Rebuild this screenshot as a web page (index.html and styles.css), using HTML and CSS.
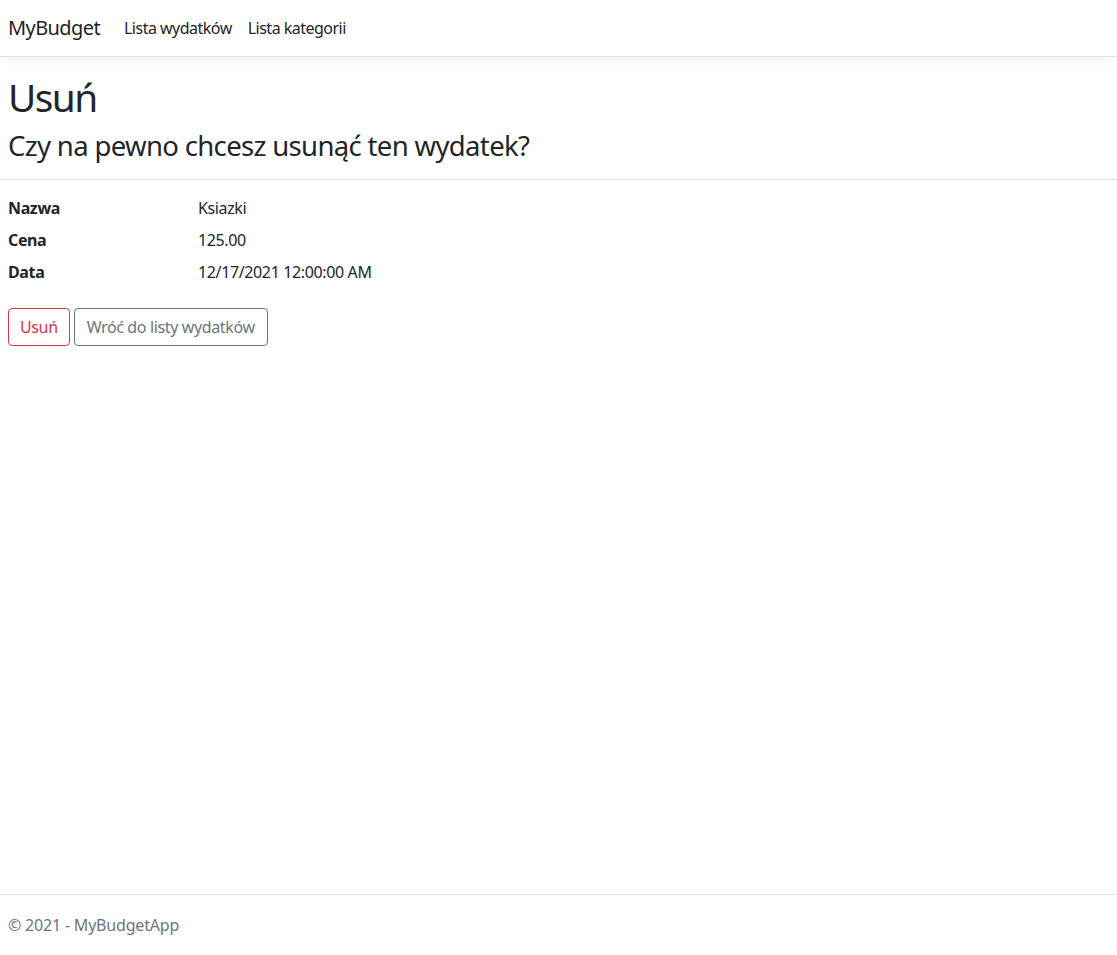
FILE: index.html
```html
<!DOCTYPE html>
<html lang="pl">
<head>
<meta charset="utf-8">
<title>Usuń - MyBudget</title>
<link rel="stylesheet" href="styles.css">
</head>
<body>
<div class="page">
  <header class="navbar">
    <a class="brand" href="#">MyBudget</a>
    <nav class="nav-links">
      <a class="nav-link" href="#">Lista wydatków</a>
      <a class="nav-link" href="#">Lista kategorii</a>
    </nav>
  </header>
  <main class="main">
    <h1 class="title">Usuń</h1>
    <h3 class="question">Czy na pewno chcesz usunąć ten wydatek?</h3>
    <hr class="divider">
    <dl class="details">
      <dt>Nazwa</dt><dd>Ksiazki</dd>
      <dt>Cena</dt><dd>125.00</dd>
      <dt>Data</dt><dd>12/17/2021 12:00:00 AM</dd>
    </dl>
    <form class="actions">
      <button type="button" class="btn btn-danger">Usuń</button>
      <a class="btn btn-secondary" href="#">Wróć do listy wydatków</a>
    </form>
  </main>
  <footer class="footer">© 2021 - MyBudgetApp</footer>
</div>
</body>
</html>
```
FILE: styles.css
```css
* { box-sizing: border-box; }
html, body { margin: 0; padding: 0; }
body {
  font-family: "Noto Sans", "Open Sans", sans-serif;
  font-size: 16px;
  line-height: 1.5;
  letter-spacing: -0.023em;
  color: #212529;
  background: #fff;
}
.page {
  min-height: 100vh;
  display: flex;
  flex-direction: column;
}
.navbar {
  display: flex;
  align-items: center;
  height: 57px;
  padding: 0 8px;
  border-bottom: 1px solid #dee2e6;
  box-shadow: 0 4px 12px rgba(0,0,0,.05);
  background: #fff;
}
.brand {
  font-size: 20px;
  line-height: 30px;
  color: rgba(0,0,0,.9);
  text-decoration: none;
  margin-right: 16px;
  letter-spacing: -0.03em;
}
.nav-links { display: flex; }
.nav-link {
  padding: 8px;
  color: #212529;
  text-decoration: none;
  letter-spacing: -0.032em;
}
.main {
  flex: 1;
  padding: 17px 8px 16px;
}
.title {
  font-size: 38.76px;
  font-weight: 400;
  line-height: 1.2;
  margin: 0 0 8px;
  letter-spacing: -0.04em;
}
.question {
  font-size: 27.5px;
  font-weight: 400;
  line-height: 1.2;
  margin: 0 0 8px;
  letter-spacing: -0.024em;
}
.divider {
  border: 0;
  border-top: 1px solid rgba(0,0,0,.12);
  margin: 17px -8px 16px;
}
.details {
  display: grid;
  grid-template-columns: 190px 1fr;
  margin: 0 0 16px;
}
.details dt { font-weight: 700; }
.details dd { margin: 0 0 8px; }
.actions { display: flex; gap: 4px; margin: 0; }
.btn {
  display: inline-block;
  font-family: inherit;
  font-size: 16px;
  letter-spacing: inherit;
  line-height: 24px;
  padding: 6px 12px;
  border-radius: 4px;
  background: transparent;
  border: 1px solid;
  text-decoration: none;
  cursor: pointer;
}
.btn-danger { color: #dc3545; border-color: #dc3545; padding: 6px 11px; }
.btn-secondary { color: #6c757d; border-color: #6c757d; }
.footer {
  border-top: 1px solid #dee2e6;
  line-height: 60px;
  padding: 0 8px;
  color: #6c757d;
  white-space: nowrap;
  letter-spacing: -0.012em;
}
```
